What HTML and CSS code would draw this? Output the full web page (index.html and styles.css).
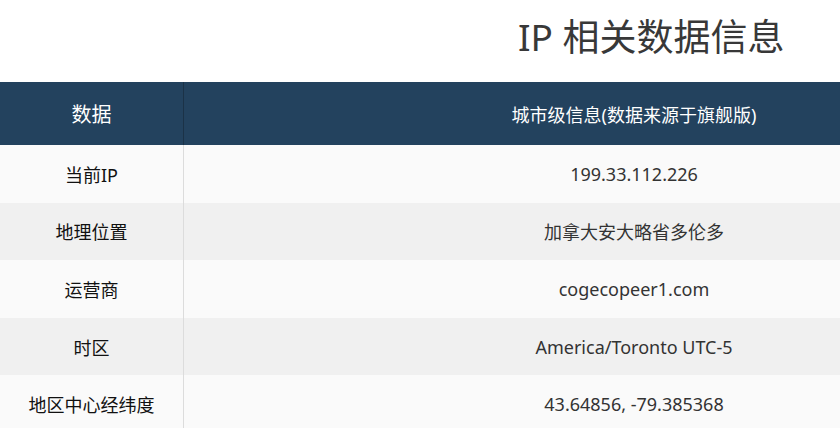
FILE: index.html
```html
<!DOCTYPE html>
<html lang="zh-CN">
<head>
<meta charset="utf-8">
<title>IP 相关数据信息</title>
<link rel="stylesheet" href="styles.css">
</head>
<body>
<div class="page">
  <h1 class="title">IP 相关数据信息</h1>
  <table class="info">
    <thead>
      <tr>
        <th class="col-key key-head">数据</th>
        <th class="col-val val-head">城市级信息(数据来源于旗舰版)</th>
      </tr>
    </thead>
    <tbody>
      <tr class="odd"><td class="col-key">当前IP</td><td class="col-val">199.33.112.226</td></tr>
      <tr class="even"><td class="col-key">地理位置</td><td class="col-val">加拿大安大略省多伦多</td></tr>
      <tr class="odd"><td class="col-key">运营商</td><td class="col-val">cogecopeer1.com</td></tr>
      <tr class="even"><td class="col-key">时区</td><td class="col-val">America/Toronto UTC-5</td></tr>
      <tr class="odd"><td class="col-key">地区中心经纬度</td><td class="col-val">43.64856, -79.385368</td></tr>
    </tbody>
  </table>
</div>
</body>
</html>
```
FILE: styles.css
```css
html, body {
  margin: 0;
  padding: 0;
  background: #ffffff;
}
body {
  font-family: "Noto Sans", "Noto Sans CJK SC", sans-serif;
  color: #333;
}
.page {
  width: 840px;
}
.title {
  margin: 0;
  height: 82px;
  box-sizing: border-box;
  padding: 12px 0 0 518px;
  font-size: 37px;
  font-weight: 400;
  line-height: 50px;
  color: #383838;
  white-space: nowrap;
}
.info {
  width: 840px;
  border-collapse: collapse;
  table-layout: fixed;
}
.info th, .info td {
  padding: 0;
  text-align: center;
  font-weight: 400;
  white-space: nowrap;
}
.col-key {
  width: 183px;
  border-right: 1px solid #dcdcdc;
}
.info .col-val {
  padding-left: 244px;
}
thead tr {
  background: #23425e;
  height: 63px;
}
thead th {
  color: #ffffff;
}
thead th.col-key {
  border-right-color: #1b3247;
}
.key-head {
  font-size: 20px;
}
.val-head {
  font-size: 18px;
}
tbody tr {
  height: 57.6px;
}
tbody td {
  font-size: 18px;
}
tbody td.col-key {
  color: #111;
}
tbody td.col-val {
  color: #333;
}
tr.odd {
  background: #fafafa;
}
tr.even {
  background: #f0f0f0;
}
```
